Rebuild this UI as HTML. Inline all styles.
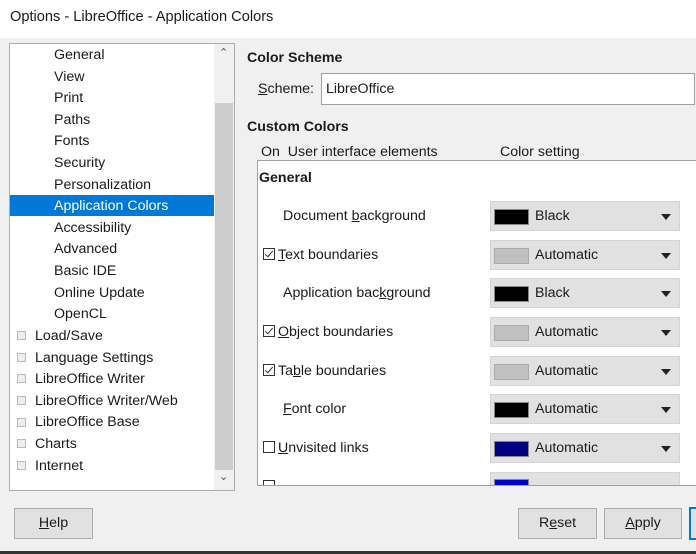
<!DOCTYPE html>
<html><head><style>
*{margin:0;padding:0;box-sizing:border-box}
body{width:696px;height:554px;background:#f0f0f0;font-family:"Liberation Sans",sans-serif;font-size:14.2px;color:#1a1a1a;position:relative;overflow:hidden}
.a{position:absolute;white-space:nowrap}
.t{line-height:18px}
.b{font-weight:bold}
.dd{position:absolute;left:490px;width:190px;height:30px;background:#e1e1e1;border:1px solid #d4d4d4}
.dd .sw{position:absolute;left:3px;top:7px;width:35px;height:16px;border:1px solid #888}
.dd .lb{position:absolute;left:44px;top:6px}
.dd .ar{position:absolute;right:8px;top:12px;width:0;height:0;border-left:5px solid transparent;border-right:5px solid transparent;border-top:6px solid #222}
.cb{display:inline-block;width:12px;height:12px;border:1px solid #333;background:#fff;vertical-align:-1px;margin-right:3px;position:relative}
.ck::after{content:"";position:absolute;left:3px;top:0px;width:3px;height:7px;border:solid #333;border-width:0 1.5px 1.5px 0;transform:rotate(40deg)}
.sq{position:absolute;left:17px;width:9px;height:9px;border:1px solid #bbb;background:#eee}
.btn{position:absolute;top:508px;height:31px;background:#e1e1e1;border:1px solid #adadad;text-align:center;line-height:29px}
</style></head><body>
<div class="a" style="left:0;top:0;width:696px;height:38px;background:#fff"></div>
<div class="a t" style="left:10px;top:8px;font-size:14.6px">Options - LibreOffice - Application Colors</div>

<div class="a" style="left:9px;top:43px;width:226px;height:448px;background:#fff;border:1px solid #adadad"></div>
<div class="a" style="left:214px;top:44px;width:20px;height:446px;background:#f0f0f0"></div>
<div class="a" style="left:215px;top:103px;width:18px;height:367px;background:#cdcdcd"></div>
<div class="a" style="left:219px;top:46px;font-size:11px;color:#555">&#8963;</div>
<div class="a" style="left:219px;top:470px;font-size:11px;color:#555">&#8964;</div>
<div class="a" style="left:10px;top:195px;width:204px;height:21px;background:#0078d7"></div>
<div class="a t" style="left:54px;top:45px;line-height:21.6px">General<br>View<br>Print<br>Paths<br>Fonts<br>Security<br>Personalization<br><span style="color:#fff">Application Colors</span><br>Accessibility<br>Advanced<br>Basic IDE<br>Online Update<br>OpenCL</div>
<div class="a t" style="left:35px;top:326px;line-height:21.6px">Load/Save<br>Language Settings<br>LibreOffice Writer<br>LibreOffice Writer/Web<br>LibreOffice Base<br>Charts<br>Internet</div>
<div class="sq" style="top:331px"></div><div class="sq" style="top:353px"></div><div class="sq" style="top:374px"></div><div class="sq" style="top:396px"></div><div class="sq" style="top:418px"></div><div class="sq" style="top:439px"></div><div class="sq" style="top:461px"></div>

<div class="a t b" style="left:247px;top:49px">Color Scheme</div>
<div class="a t" style="left:258px;top:80px"><u>S</u>cheme:</div>
<div class="a" style="left:321px;top:73px;width:374px;height:32px;background:#fff;border:1px solid #a0a0a0"></div>
<div class="a t" style="left:326px;top:80px">LibreOffice</div>
<div class="a t b" style="left:247px;top:118px">Custom Colors</div>
<div class="a t" style="left:261px;top:143px">On&nbsp; User interface elements</div>
<div class="a t" style="left:500px;top:143px">Color setting</div>
<div class="a" style="left:257px;top:160px;width:440px;height:326px;background:#fff;border:1px solid #a0a0a0;border-right:none;overflow:hidden">
</div>
<div class="a t b" style="left:259px;top:169px">General</div>
<div class="a t" style="left:283px;top:207px">Document <u>b</u>ackground</div>
<div class="a t" style="left:263px;top:246px"><span class="cb ck"></span><u>T</u>ext boundaries</div>
<div class="a t" style="left:283px;top:284px">Application bac<u>k</u>ground</div>
<div class="a t" style="left:263px;top:323px"><span class="cb ck"></span><u>O</u>bject boundaries</div>
<div class="a t" style="left:263px;top:362px"><span class="cb ck"></span>Ta<u>b</u>le boundaries</div>
<div class="a t" style="left:283px;top:400px"><u>F</u>ont color</div>
<div class="a t" style="left:263px;top:439px"><span class="cb"></span><u>U</u>nvisited links</div>

<div class="dd" style="top:201px"><div class="sw" style="background:#000"></div><div class="lb">Black</div><div class="ar"></div></div>
<div class="dd" style="top:240px"><div class="sw" style="background:#c0c0c0;border-color:#aaa"></div><div class="lb">Automatic</div><div class="ar"></div></div>
<div class="dd" style="top:278px"><div class="sw" style="background:#000"></div><div class="lb">Black</div><div class="ar"></div></div>
<div class="dd" style="top:317px"><div class="sw" style="background:#c0c0c0;border-color:#aaa"></div><div class="lb">Automatic</div><div class="ar"></div></div>
<div class="dd" style="top:356px"><div class="sw" style="background:#c0c0c0;border-color:#aaa"></div><div class="lb">Automatic</div><div class="ar"></div></div>
<div class="dd" style="top:394px"><div class="sw" style="background:#000"></div><div class="lb">Automatic</div><div class="ar"></div></div>
<div class="dd" style="top:433px"><div class="sw" style="background:#000080"></div><div class="lb">Automatic</div><div class="ar"></div></div>
<div class="a" style="left:258px;top:472px;width:437px;height:13px;overflow:hidden">
 <div class="dd" style="left:232px;top:0"><div class="sw" style="background:#0000cc;top:6px"></div></div>
 <div class="a" style="left:5px;top:8px;width:12px;height:12px;border:1px solid #333"></div>
</div>

<div class="btn" style="left:14px;width:79px"><u>H</u>elp</div>
<div class="btn" style="left:518px;width:79px">R<u>e</u>set</div>
<div class="btn" style="left:604px;width:78px"><u>A</u>pply</div>
<div class="a" style="left:689px;top:507px;width:10px;height:33px;border:2px solid #0078d7;background:#e1e1e1"></div>
<div class="a" style="left:0;top:551px;width:696px;height:3px;background:#333"></div>
</body></html>
